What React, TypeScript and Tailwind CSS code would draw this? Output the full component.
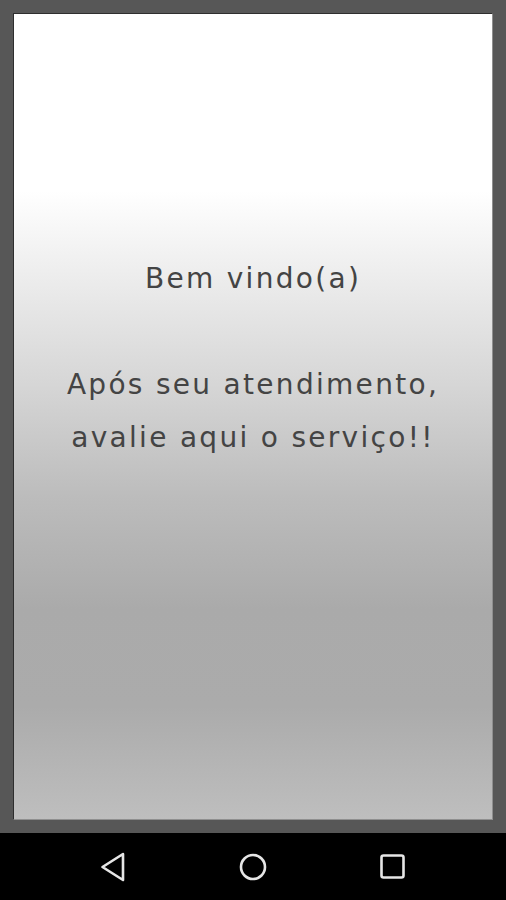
import React from 'react';

function NavBar() {
  return (
    <div className="flex h-[67px] items-center justify-center bg-black">
      <div className="flex w-[140px] justify-center">
        <svg width="26" height="30" viewBox="0 0 26 30" fill="none">
          <path
            d="M23 2 L2.5 15 L23 28 Z"
            stroke="#e6e6e6"
            strokeWidth="2.6"
            strokeLinejoin="round"
          />
        </svg>
      </div>
      <div className="flex w-[140px] justify-center">
        <svg width="30" height="30" viewBox="0 0 30 30" fill="none">
          <circle cx="15" cy="15" r="12" stroke="#e6e6e6" strokeWidth="2.6" />
        </svg>
      </div>
      <div className="flex w-[140px] justify-center">
        <svg width="28" height="28" viewBox="0 0 28 28" fill="none">
          <rect x="2.5" y="2.5" width="22" height="22" rx="2" stroke="#e6e6e6" strokeWidth="2.6" />
        </svg>
      </div>
    </div>
  );
}

export default function App() {
  return (
    <div className="flex h-[900px] w-full flex-col bg-[#575757]">
      <div className="flex-1 p-[13px]">
        <div className="h-full border-t border-l border-r border-b border-t-[#2e2e2e] border-l-[#2e2e2e] border-r-[#8f8f8f] border-b-[#8f8f8f] bg-[linear-gradient(to_bottom,#ffffff_0%,#ffffff_22%,#ececec_33%,#d6d6d6_46%,#bcbcbc_60%,#aaaaaa_74%,#ababab_86%,#bebebe_100%)] pt-[238px]">
          <p className="whitespace-pre-line text-center font-['DejaVu_Sans',sans-serif] text-[28px] leading-[53px] tracking-[2.3px] text-[#444444]">
            {'Bem vindo(a)\n\nApós seu atendimento,\navalie aqui o serviço!!'}
          </p>
        </div>
      </div>
      <NavBar />
    </div>
  );
}
